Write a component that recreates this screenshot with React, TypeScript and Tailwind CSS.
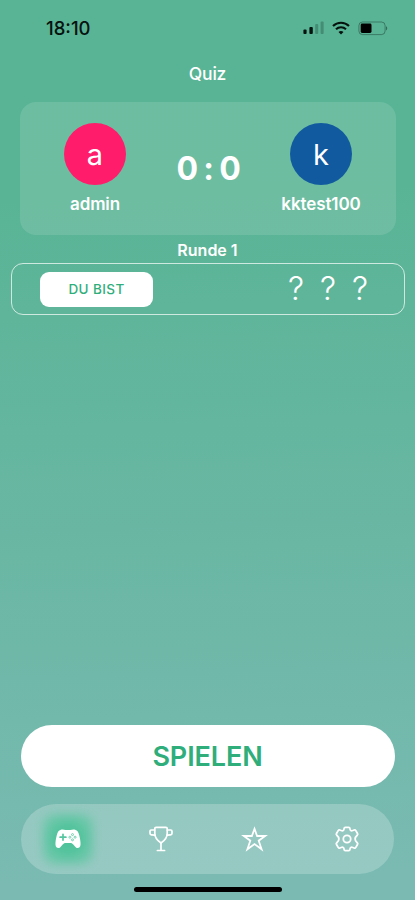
import { ReactNode } from "react";

interface Player {
  name: string;
  score: number;
}

const players: Player[] = [
  { name: "admin", score: 0 },
  { name: "kktest100", score: 0 },
];

const SignalIcon = () => (
  <svg width="22" height="14" viewBox="0 0 22 14" fill="#06120e">
    <rect x="1.4" y="8.5" width="3.2" height="4.5" rx="1" />
    <rect x="7.4" y="6" width="3.4" height="7" rx="1" />
    <rect x="13.2" y="3" width="3" height="10" rx="1" opacity="0.25" />
    <rect x="18.6" y="0.5" width="3" height="12.5" rx="1" opacity="0.25" />
  </svg>
);

const WifiIcon = () => (
  <svg width="18" height="14" viewBox="0 0 18 14" fill="none" stroke="#06120e" strokeWidth="2.1">
    <path d="M1 5.1C5.4 0.6 12.6 0.6 17 5.1" />
    <path d="M4 8.3C6.8 5.6 11.2 5.6 14 8.3" />
    <path d="M9 13.4L6.5 10.9C7.9 9.6 10.1 9.6 11.5 10.9Z" fill="#06120e" stroke="none" />
  </svg>
);

const BatteryIcon = () => (
  <svg width="30" height="15" viewBox="0 0 30 15">
    <rect x="0.9" y="1" width="26.2" height="12.6" rx="3.6" fill="none" stroke="#06120e" strokeOpacity="0.35" />
    <path d="M28 5.2C29.7 5.8 29.7 8.8 28 9.4Z" fill="#06120e" fillOpacity="0.45" />
    <rect x="2.7" y="2.6" width="10.8" height="9.4" rx="1.4" fill="#000" />
  </svg>
);

const GamepadIcon = () => (
  <svg width="26" height="20" viewBox="0 0 26 20">
    <path
      d="M6.6 0.6C8.3 0.2 9.2 1 10.6 1H15.4C16.8 1 17.7 0.2 19.4 0.6C22.3 1.1 23.4 3.2 24.2 6.2C25.1 9.6 25.8 13.4 25.5 16C25.2 18.9 22.6 19.9 20.7 18.2C19.1 16.8 18 14.6 16.2 14H9.8C8 14.6 6.9 16.8 5.3 18.2C3.4 19.9 0.8 18.9 0.5 16C0.2 13.4 0.9 9.6 1.8 6.2C2.6 3.2 3.7 1.1 6.6 0.6Z"
      fill="#fff"
    />
    <path d="M8 5.3V11.1M5.1 8.2H10.9" stroke="#55c6a0" strokeWidth="1.7" strokeLinecap="round" />
    <g fill="none" stroke="#55c6a0" strokeWidth="0.8">
      <circle cx="17.5" cy="5.6" r="1" />
      <circle cx="17.5" cy="10.8" r="1" />
      <circle cx="14.9" cy="8.2" r="1" />
      <circle cx="20.1" cy="8.2" r="1" />
    </g>
  </svg>
);

const TrophyIcon = () => (
  <svg width="24" height="26" viewBox="0 0 24 26" fill="none" stroke="#fff" strokeWidth="1.7" strokeLinejoin="round" strokeLinecap="round">
    <path d="M5.8 2.6Q5.8 1.3 7.1 1.3H16.9Q18.2 1.3 18.2 2.6V7.6C18.2 11.6 15.2 15 12 17C8.8 15 5.8 11.6 5.8 7.6Z" />
    <path d="M5.6 4H2.2Q1 4 1 5.2V7.2Q1 8.8 2.5 8.9L5.8 9.2" />
    <path d="M18.4 4H21.8Q23 4 23 5.2V7.2Q23 8.8 21.5 8.9L18.2 9.2" />
    <path d="M12 17.2V24.2M8.4 24.5H15.6" />
  </svg>
);

const StarIcon = () => (
  <svg width="27" height="26" viewBox="0 0 27 26" fill="none" stroke="#fff" strokeWidth="1.8" strokeLinejoin="miter">
    <path d="M13.5 2.8L16.1 10H24.2L17.7 14.7L20.6 23.3L13.5 18L6.4 23.3L9.3 14.7L2.8 10H10.9Z" />
  </svg>
);

const GearIcon = () => (
  <svg width="26" height="26" viewBox="0 0 26 26" fill="none" stroke="#fff" strokeWidth="1.8" strokeLinejoin="round">
    <path d="M11.3 1.3H14.7Q15.8 1.3 15.9 2.5Q16.2 5.6 18.9 4.5L20.1 4Q21.2 3.6 21.8 4.6L23.5 7.5Q24.1 8.5 23.2 9.2C20.4 11.6 20.4 14.4 23.2 16.8Q24.1 17.5 23.5 18.5L21.8 21.4Q21.2 22.4 20.1 22L18.9 21.5Q16.2 20.4 15.9 23.5Q15.8 24.7 14.7 24.7H11.3Q10.2 24.7 10.1 23.5Q9.8 20.4 7.1 21.5L5.9 22Q4.8 22.4 4.2 21.4L2.5 18.5Q1.9 17.5 2.8 16.8C5.6 14.4 5.6 11.6 2.8 9.2Q1.9 8.5 2.5 7.5L4.2 4.6Q4.8 3.6 5.9 4L7.1 4.5Q9.8 5.6 10.1 2.5Q10.2 1.3 11.3 1.3Z" />
    <circle cx="13" cy="13" r="3.7" />
  </svg>
);

const StatusBar = () => (
  <div className="flex h-14 items-center justify-between pl-[46px] pr-[27px]">
    <span className="mt-px text-[18.5px] font-medium text-[#06120e]">18:10</span>
    <div className="flex items-center gap-2">
      <SignalIcon />
      <WifiIcon />
      <BatteryIcon />
    </div>
  </div>
);

const PlayerBadge = ({ player, color }: { player: Player; color: string }) => (
  <div className="flex w-[110px] flex-col items-center">
    <div className={`flex size-[62px] items-center justify-center rounded-full text-[29px] leading-none text-white ${color}`}>
      {player.name[0]}
    </div>
    <span className="mt-[9px] text-[17px] font-semibold leading-5 tracking-[-0.1px]">{player.name}</span>
  </div>
);

const NavItem = ({ active, children }: { active?: boolean; children: ReactNode }) => (
  <button className="relative flex size-[54px] items-center justify-center">
    {/* soft glow behind the selected tab */}
    {active && (
      <span className="absolute inset-0.5 rounded-xl bg-[radial-gradient(circle,#48c397_30%,#6cc8a9_75%)] opacity-90 blur-[5px]" />
    )}
    <span className="relative">{children}</span>
  </button>
);

export default function App() {
  const [home, guest] = players;

  return (
    <div className="flex h-[900px] w-[415px] flex-col overflow-hidden bg-[linear-gradient(178deg,#58b495_0%,#59b495_22%,#7abab2_97%)] font-['Inter',sans-serif] text-white">
      <StatusBar />

      <h1 className="text-center text-[17.5px] font-medium leading-9 tracking-[-0.2px]">Quiz</h1>

      <section className="ml-5 mt-2.5 flex h-[133px] w-[376px] justify-between rounded-2xl bg-white/12 px-5 pt-[21px]">
        <PlayerBadge player={home} color="bg-[#ff1c6b]" />
        <div className="mt-7 whitespace-nowrap text-[32px] font-bold leading-9 tracking-[-1.2px]">
          {home.score} : {guest.score}
        </div>
        <PlayerBadge player={guest} color="bg-[#115a9f]" />
      </section>

      <h2 className="mt-[3px] text-center text-[16px] font-semibold leading-6">Runde 1</h2>

      <section className="ml-[11px] mt-px flex h-[52px] w-[394px] items-center justify-between rounded-xl border border-white/70 pl-7 pr-7">
        <button className="h-[35px] w-[113px] rounded-[9px] bg-white text-[13.5px] font-medium tracking-[0.4px] text-[#2fae7b]">
          DU BIST
        </button>
        <div className="flex text-[32px] font-[350] leading-none">
          {[0, 1, 2].map((i) => (
            <span key={i} className="w-8 text-center">
              ?
            </span>
          ))}
        </div>
      </section>

      <footer className="mt-auto flex flex-col items-center pb-2">
        <button className="h-[62px] w-[374px] rounded-full bg-white pt-0.5 text-[27px] font-semibold tracking-[-0.1px] text-[#2fae7b]">
          SPIELEN
        </button>
        <nav className="mt-[17px] flex h-[70px] w-[373px] items-center justify-between rounded-full bg-white/22 px-5">
          <NavItem active>
            <GamepadIcon />
          </NavItem>
          <NavItem>
            <TrophyIcon />
          </NavItem>
          <NavItem>
            <StarIcon />
          </NavItem>
          <NavItem>
            <GearIcon />
          </NavItem>
        </nav>
        <div className="mt-[13px] h-[5px] w-[148px] rounded-full bg-black" />
      </footer>
    </div>
  );
}
